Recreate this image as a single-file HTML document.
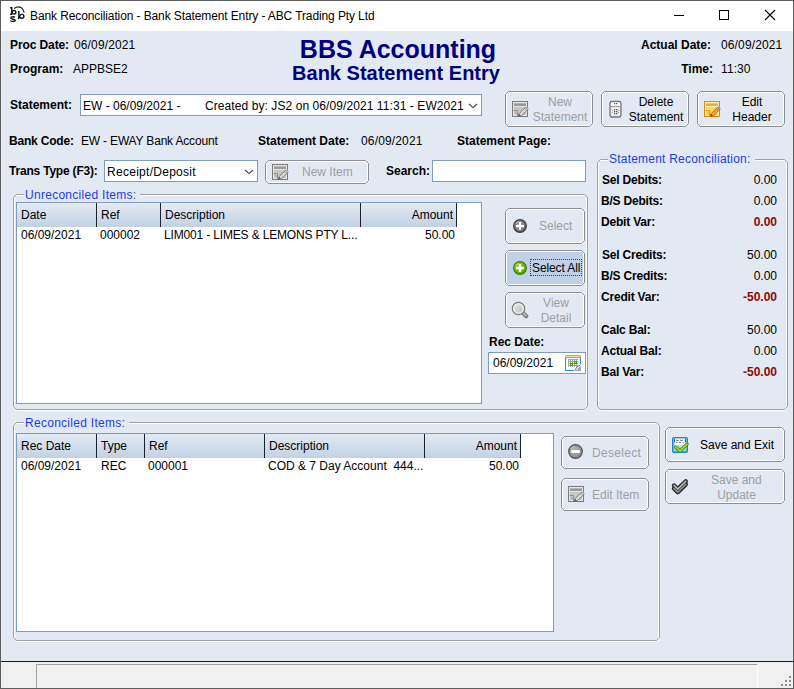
<!DOCTYPE html>
<html><head><meta charset="utf-8">
<style>
*{margin:0;padding:0;box-sizing:border-box}
html,body{width:794px;height:689px;overflow:hidden;background:#E3E9F2}
body{position:relative;font-family:"Liberation Sans",sans-serif;font-size:12px;color:#000}
.a{position:absolute;white-space:pre;line-height:14px}
.b{font-weight:bold}
.r{text-align:right}
.win{position:absolute;left:0;top:0;width:794px;height:689px;border:1px solid #5E5E5E;background:#E3E9F2}
.title{position:absolute;left:1px;top:1px;width:792px;height:30px;background:#fff}
.status{position:absolute;left:1px;top:661px;width:792px;height:27px;background:#F0F0F0;border-top:1px solid #1a1a1a}
.grp{position:absolute;border:1px solid #A0A0A0;border-radius:3px;box-shadow:inset 1px 1px 0 #fff,inset -1px 0 0 #fff,0 1px 0 #fff}
.cap{position:absolute;color:#1840E8;background:#E3E9F2;padding:0 4px 0 1px;letter-spacing:0.28px;line-height:14px;white-space:pre}
.box{position:absolute;background:#fff;border:1px solid #7F9DB9}
.btn{position:absolute;border:1px solid #8E8E8E;border-radius:4px;box-shadow:inset 1px 1px 0 #fff,inset -1px -1px 0 #fff;background:#E3E9F2}
.dis{color:#9E9EA2}
.grid{position:absolute;background:#fff;border:1px solid #7F9DB9}
.hdr{position:absolute;left:0;top:0;height:24px;background:linear-gradient(#E4EAF3,#C2D1E3)}
.sep{position:absolute;top:0;width:1px;height:24px;background:#1A2230}
.red{color:#8B0A0A}
.navy{color:#000080}
</style></head><body>
<div class="win"></div>
<div class="title"></div>
<!-- title icon -->

<div class="a" style="left:30px;top:9px;letter-spacing:-0.11px">Bank Reconciliation - Bank Statement Entry - ABC Trading Pty Ltd</div>
<!-- caption buttons -->
<div style="position:absolute;left:674px;top:15px;width:10px;height:1px;background:#000"></div>
<div style="position:absolute;left:719px;top:10px;width:10px;height:10px;border:1px solid #000"></div>
<svg style="position:absolute;left:764px;top:9px" width="12" height="12" viewBox="0 0 12 12"><path d="M1 1L11 11M11 1L1 11" stroke="#000" stroke-width="1.1"/></svg>

<!-- header -->
<div class="a b" style="left:10px;top:38px;letter-spacing:-0.1px">Proc Date:</div>
<div class="a" style="left:74px;top:38px;letter-spacing:0.13px">06/09/2021</div>
<div class="a b" style="left:10px;top:62px">Program:</div>
<div class="a" style="left:73px;top:62px">APPBSE2</div>
<div class="a b navy" style="left:198px;width:400px;text-align:center;top:35px;font-size:25px;line-height:28px">BBS Accounting</div>
<div class="a b navy" style="left:196px;width:400px;text-align:center;top:62px;font-size:20px;line-height:22px">Bank Statement Entry</div>
<div class="a b r" style="left:611px;width:100px;top:38px">Actual Date:</div>
<div class="a" style="left:721px;top:38px;letter-spacing:0.13px">06/09/2021</div>
<div class="a b r" style="left:613px;width:100px;top:62px">Time:</div>
<div class="a" style="left:721px;top:62px;letter-spacing:0.1px">11:30</div>

<!-- statement row -->
<div class="a b" style="left:10px;top:98px">Statement:</div>
<div class="box" style="left:80px;top:94px;width:402px;height:22px"></div>
<div class="a" style="left:83px;top:99px">EW - 06/09/2021 -</div>
<div class="a" style="left:205px;top:99px;letter-spacing:0.08px">Created by: JS2 on 06/09/2021 11:31 - EW2021</div>

<!-- buttons top -->
<svg style="position:absolute;left:505px;top:91px" width="88" height="36" viewBox="0 0 88 36"><path d="M3.5 0.5H84.5L87.5 3.5V32.5L84.5 35.5H3.5L0.5 32.5V3.5Z" fill="none" stroke="#8E8E8E"/><path d="M3.5 1.5H84.5L86.5 3.5V32.5L84.5 34.5H3.5L1.5 32.5V3.5Z" fill="none" stroke="#fff"/></svg>
<div class="a dis" style="left:530px;width:60px;text-align:center;top:95px">New</div>
<div class="a dis" style="left:530px;width:60px;text-align:center;top:110px">Statement</div>
<svg style="position:absolute;left:601px;top:91px" width="88" height="36" viewBox="0 0 88 36"><path d="M3.5 0.5H84.5L87.5 3.5V32.5L84.5 35.5H3.5L0.5 32.5V3.5Z" fill="none" stroke="#8E8E8E"/><path d="M3.5 1.5H84.5L86.5 3.5V32.5L84.5 34.5H3.5L1.5 32.5V3.5Z" fill="none" stroke="#fff"/></svg>
<div class="a" style="left:626px;width:60px;text-align:center;top:95px">Delete</div>
<div class="a" style="left:626px;width:60px;text-align:center;top:110px">Statement</div>
<svg style="position:absolute;left:697px;top:91px" width="88" height="36" viewBox="0 0 88 36"><path d="M3.5 0.5H84.5L87.5 3.5V32.5L84.5 35.5H3.5L0.5 32.5V3.5Z" fill="none" stroke="#8E8E8E"/><path d="M3.5 1.5H84.5L86.5 3.5V32.5L84.5 34.5H3.5L1.5 32.5V3.5Z" fill="none" stroke="#fff"/></svg>
<div class="a" style="left:722px;width:60px;text-align:center;top:95px">Edit</div>
<div class="a" style="left:722px;width:60px;text-align:center;top:110px">Header</div>

<!-- bank code row -->
<div class="a b" style="left:9px;top:134px;letter-spacing:-0.2px">Bank Code:</div>
<div class="a" style="left:81px;top:134px;letter-spacing:-0.18px">EW - EWAY Bank Account</div>
<div class="a b" style="left:258px;top:134px">Statement Date:</div>
<div class="a" style="left:361px;top:134px;letter-spacing:0.15px">06/09/2021</div>
<div class="a b" style="left:457px;top:134px">Statement Page:</div>

<!-- trans type row -->
<div class="a b" style="left:9px;top:164px;letter-spacing:-0.2px">Trans Type (F3):</div>
<div class="box" style="left:104px;top:160px;width:154px;height:22px"></div>
<div class="a" style="left:107px;top:165px;letter-spacing:0.28px">Receipt/Deposit</div>
<svg style="position:absolute;left:265px;top:160px" width="104" height="24" viewBox="0 0 104 24"><path d="M3.5 0.5H100.5L103.5 3.5V20.5L100.5 23.5H3.5L0.5 20.5V3.5Z" fill="none" stroke="#8E8E8E"/><path d="M3.5 1.5H100.5L102.5 3.5V20.5L100.5 22.5H3.5L1.5 20.5V3.5Z" fill="none" stroke="#fff"/></svg>
<div class="a dis" style="left:302px;top:165px">New Item</div>
<div class="a b" style="left:386px;top:164px">Search:</div>
<div class="box" style="left:432px;top:160px;width:154px;height:22px"></div>

<!-- unreconciled group -->
<svg style="position:absolute;left:13px;top:194px" width="575" height="217" viewBox="0 0 575 217"><path d="M3.5 1.5H571.5M1.5 3.5V212.5M573.5 3.5V212.5M3.5 216.5H571.5L574.5 213.5" fill="none" stroke="#fff"/><path d="M3.5 0.5H571.5L574.5 3.5V212.5L571.5 215.5H3.5L0.5 212.5V3.5Z" fill="none" stroke="#A0A0A0"/></svg>
<div class="cap" style="left:24px;top:188px">Unreconciled Items:</div>
<div class="grid" style="left:16px;top:202px;width:466px;height:202px">
  <div class="hdr" style="width:440px"></div>
  <div class="sep" style="left:79px"></div>
  <div class="sep" style="left:143px"></div>
  <div class="sep" style="left:343px"></div>
  <div class="sep" style="left:439px"></div>
</div>
<div class="a" style="left:21px;top:208px">Date</div>
<div class="a" style="left:101px;top:208px">Ref</div>
<div class="a" style="left:165px;top:208px">Description</div>
<div class="a r" style="left:353px;width:100px;top:208px">Amount</div>
<div class="a" style="left:21px;top:228px">06/09/2021</div>
<div class="a" style="left:100px;top:228px">000002</div>
<div class="a" style="left:164px;top:228px;letter-spacing:-0.16px">LIM001 - LIMES &amp; LEMONS PTY L...</div>
<div class="a r" style="left:355px;width:100px;top:228px">50.00</div>

<svg style="position:absolute;left:505px;top:208px" width="80" height="36" viewBox="0 0 80 36"><path d="M3.5 0.5H76.5L79.5 3.5V32.5L76.5 35.5H3.5L0.5 32.5V3.5Z" fill="none" stroke="#8E8E8E"/><path d="M3.5 1.5H76.5L78.5 3.5V32.5L76.5 34.5H3.5L1.5 32.5V3.5Z" fill="none" stroke="#fff"/></svg>
<div class="a dis" style="left:539px;top:219px">Select</div>
<svg style="position:absolute;left:505px;top:250px" width="80" height="36" viewBox="0 0 80 36"><path d="M3.5 0.5H76.5L79.5 3.5V32.5L76.5 35.5H3.5L0.5 32.5V3.5Z" fill="#BFD0E8" stroke="#8E8E8E"/><path d="M3.5 1.5H76.5L78.5 3.5V32.5L76.5 34.5H3.5L1.5 32.5V3.5Z" fill="none" stroke="#fff"/></svg>
<div class="a" style="left:532px;top:261px;letter-spacing:-0.1px">Select All</div>
<svg style="position:absolute;left:505px;top:292px" width="80" height="36" viewBox="0 0 80 36"><path d="M3.5 0.5H76.5L79.5 3.5V32.5L76.5 35.5H3.5L0.5 32.5V3.5Z" fill="none" stroke="#8E8E8E"/><path d="M3.5 1.5H76.5L78.5 3.5V32.5L76.5 34.5H3.5L1.5 32.5V3.5Z" fill="none" stroke="#fff"/></svg>
<div class="a dis" style="left:526px;width:60px;text-align:center;top:296px">View</div>
<div class="a dis" style="left:526px;width:60px;text-align:center;top:311px">Detail</div>
<div class="a b" style="left:489px;top:335px">Rec Date:</div>
<div class="box" style="left:488px;top:352px;width:98px;height:22px"></div>
<div class="a" style="left:493px;top:356px">06/09/2021</div>

<!-- statement reconciliation group -->
<svg style="position:absolute;left:597px;top:159px" width="191" height="252" viewBox="0 0 191 252"><path d="M3.5 1.5H187.5M1.5 3.5V247.5M189.5 3.5V247.5M3.5 251.5H187.5L190.5 248.5" fill="none" stroke="#fff"/><path d="M3.5 0.5H187.5L190.5 3.5V247.5L187.5 250.5H3.5L0.5 247.5V3.5Z" fill="none" stroke="#A0A0A0"/></svg>
<div class="cap" style="left:608px;top:152px;letter-spacing:0.22px">Statement Reconciliation:</div>
<div class="a b" style="left:602px;top:173px;letter-spacing:-0.2px">Sel Debits:</div>
<div class="a r" style="left:677px;width:100px;top:173px">0.00</div>
<div class="a b" style="left:601px;top:194px;letter-spacing:-0.2px">B/S Debits:</div>
<div class="a r" style="left:677px;width:100px;top:194px">0.00</div>
<div class="a b" style="left:601px;top:215px;letter-spacing:-0.2px">Debit Var:</div>
<div class="a b r red" style="left:677px;width:100px;top:215px">0.00</div>
<div class="a b" style="left:602px;top:248px;letter-spacing:-0.2px">Sel Credits:</div>
<div class="a r" style="left:677px;width:100px;top:248px">50.00</div>
<div class="a b" style="left:601px;top:269px;letter-spacing:-0.2px">B/S Credits:</div>
<div class="a r" style="left:677px;width:100px;top:269px">0.00</div>
<div class="a b" style="left:601px;top:290px;letter-spacing:-0.2px">Credit Var:</div>
<div class="a b r red" style="left:677px;width:100px;top:290px">-50.00</div>
<div class="a b" style="left:601px;top:323px;letter-spacing:-0.2px">Calc Bal:</div>
<div class="a r" style="left:677px;width:100px;top:323px">50.00</div>
<div class="a b" style="left:601px;top:344px;letter-spacing:-0.2px">Actual Bal:</div>
<div class="a r" style="left:677px;width:100px;top:344px">0.00</div>
<div class="a b" style="left:601px;top:365px;letter-spacing:-0.2px">Bal Var:</div>
<div class="a b r red" style="left:677px;width:100px;top:365px">-50.00</div>

<!-- reconciled group -->
<svg style="position:absolute;left:13px;top:422px" width="647" height="220" viewBox="0 0 647 220"><path d="M3.5 1.5H643.5M1.5 3.5V215.5M645.5 3.5V215.5M3.5 219.5H643.5L646.5 216.5" fill="none" stroke="#fff"/><path d="M3.5 0.5H643.5L646.5 3.5V215.5L643.5 218.5H3.5L0.5 215.5V3.5Z" fill="none" stroke="#A0A0A0"/></svg>
<div class="cap" style="left:24px;top:416px">Reconciled Items:</div>
<div class="grid" style="left:16px;top:433px;width:538px;height:199px">
  <div class="hdr" style="width:504px"></div>
  <div class="sep" style="left:79px"></div>
  <div class="sep" style="left:127px"></div>
  <div class="sep" style="left:247px"></div>
  <div class="sep" style="left:407px"></div>
  <div class="sep" style="left:503px"></div>
</div>
<div class="a" style="left:21px;top:439px">Rec Date</div>
<div class="a" style="left:101px;top:439px">Type</div>
<div class="a" style="left:149px;top:439px">Ref</div>
<div class="a" style="left:269px;top:439px">Description</div>
<div class="a r" style="left:417px;width:100px;top:439px">Amount</div>
<div class="a" style="left:21px;top:459px">06/09/2021</div>
<div class="a" style="left:101px;top:459px">REC</div>
<div class="a" style="left:148px;top:459px">000001</div>
<div class="a" style="left:268px;top:459px">COD &amp; 7 Day Account  444...</div>
<div class="a r" style="left:419px;width:100px;top:459px">50.00</div>

<svg style="position:absolute;left:561px;top:436px" width="88" height="33" viewBox="0 0 88 33"><path d="M3.5 0.5H84.5L87.5 3.5V29.5L84.5 32.5H3.5L0.5 29.5V3.5Z" fill="none" stroke="#8E8E8E"/><path d="M3.5 1.5H84.5L86.5 3.5V29.5L84.5 31.5H3.5L1.5 29.5V3.5Z" fill="none" stroke="#fff"/></svg>
<div class="a dis" style="left:592px;top:446px;letter-spacing:0.3px">Deselect</div>
<svg style="position:absolute;left:561px;top:478px" width="88" height="33" viewBox="0 0 88 33"><path d="M3.5 0.5H84.5L87.5 3.5V29.5L84.5 32.5H3.5L0.5 29.5V3.5Z" fill="none" stroke="#8E8E8E"/><path d="M3.5 1.5H84.5L86.5 3.5V29.5L84.5 31.5H3.5L1.5 29.5V3.5Z" fill="none" stroke="#fff"/></svg>
<div class="a dis" style="left:592px;top:488px">Edit Item</div>
<svg style="position:absolute;left:665px;top:427px" width="120" height="35" viewBox="0 0 120 35"><path d="M3.5 0.5H116.5L119.5 3.5V31.5L116.5 34.5H3.5L0.5 31.5V3.5Z" fill="none" stroke="#8E8E8E"/><path d="M3.5 1.5H116.5L118.5 3.5V31.5L116.5 33.5H3.5L1.5 31.5V3.5Z" fill="none" stroke="#fff"/></svg>
<div class="a" style="left:700px;top:438px">Save and Exit</div>
<svg style="position:absolute;left:665px;top:469px" width="120" height="35" viewBox="0 0 120 35"><path d="M3.5 0.5H116.5L119.5 3.5V31.5L116.5 34.5H3.5L0.5 31.5V3.5Z" fill="none" stroke="#8E8E8E"/><path d="M3.5 1.5H116.5L118.5 3.5V31.5L116.5 33.5H3.5L1.5 31.5V3.5Z" fill="none" stroke="#fff"/></svg>
<div class="a dis" style="left:711px;top:473px">Save and</div>
<div class="a dis" style="left:711px;width:51px;text-align:center;top:488px">Update</div>

<!-- status bar -->
<div class="status"></div>
<div style="position:absolute;left:36px;top:664px;width:722px;height:24px;border-top:1px solid #A0A0A0;border-left:1px solid #A0A0A0;border-right:1px solid #fff"></div>
<!-- icons -->
<svg style="position:absolute;left:468px;top:103px" width="10" height="6" viewBox="0 0 10 6"><path d="M1 1L5 4.6L9 1" fill="none" stroke="#404040" stroke-width="1.1"/></svg>
<svg style="position:absolute;left:244px;top:169px" width="10" height="6" viewBox="0 0 10 6"><path d="M1 1L5 4.6L9 1" fill="none" stroke="#404040" stroke-width="1.1"/></svg>
<div style="position:absolute;left:530px;top:259px;width:52px;height:17px;border:1px dotted #4a3a2a"></div>

<svg style="position:absolute;left:512px;top:101px" width="18" height="17" viewBox="0 0 18 17">
<rect x="0.5" y="0.5" width="15" height="15" fill="#c6c6c6" stroke="#7c7c7c"/>
<rect x="1.5" y="1.5" width="13" height="13" fill="none" stroke="#e4e4e4"/>
<rect x="2" y="2.6" width="12" height="2.4" fill="#9a9a9a"/>
<rect x="2" y="5" width="12" height="1" fill="#e4e4e4"/>
<path d="M1.5 9.5H5.5V15" fill="none" stroke="#7c7c7c" opacity="0.75"/>
<path d="M2.5 10.5L5 13" stroke="#7c7c7c" opacity="0.35"/>
<path d="M6.3 15.2L7.2 12.6L13.6 6.2L15.8 8.4L9.4 14.8Z" fill="#dadada" stroke="#5c5c5c" stroke-width="0.75"/>
<path d="M13.6 6.2L15.8 8.4L16.8 7.4L14.6 5.2Z" fill="#b8b8b8"/>
<path d="M12.6 7.2L14.8 9.4" stroke="#9a9a9a" stroke-width="0.9"/>
<path d="M6.3 15.2L7.1 13L8.6 14.5Z" fill="#505050"/>
</svg>
<svg style="position:absolute;left:704px;top:101px" width="18" height="17" viewBox="0 0 18 17">
<rect x="0.5" y="0.5" width="15" height="15" fill="#FFD65A" stroke="#D08A1E"/>
<rect x="1.5" y="1.5" width="13" height="13" fill="none" stroke="#FFF2B8"/>
<rect x="2" y="2.6" width="12" height="2.4" fill="#F2AE2A"/>
<rect x="2" y="5" width="12" height="1" fill="#FFF2B8"/>
<path d="M1.5 9.5H5.5V15" fill="none" stroke="#D08A1E" opacity="0.75"/>
<path d="M2.5 10.5L5 13" stroke="#D08A1E" opacity="0.35"/>
<path d="M6.3 15.2L7.2 12.6L13.6 6.2L15.8 8.4L9.4 14.8Z" fill="#FFA21C" stroke="#A85400" stroke-width="0.75"/>
<path d="M13.6 6.2L15.8 8.4L16.8 7.4L14.6 5.2Z" fill="#E070E0"/>
<path d="M12.6 7.2L14.8 9.4" stroke="#5a8ad0" stroke-width="0.9"/>
<path d="M6.3 15.2L7.1 13L8.6 14.5Z" fill="#404040"/>
</svg>
<svg style="position:absolute;left:272px;top:164px" width="18" height="17" viewBox="0 0 18 17">
<rect x="0.5" y="0.5" width="15" height="15" fill="#c6c6c6" stroke="#7c7c7c"/>
<rect x="1.5" y="1.5" width="13" height="13" fill="none" stroke="#e4e4e4"/>
<rect x="2" y="2.6" width="12" height="2.4" fill="#9a9a9a"/>
<rect x="2" y="5" width="12" height="1" fill="#e4e4e4"/>
<path d="M1.5 9.5H5.5V15" fill="none" stroke="#7c7c7c" opacity="0.75"/>
<path d="M2.5 10.5L5 13" stroke="#7c7c7c" opacity="0.35"/>
<path d="M6.3 15.2L7.2 12.6L13.6 6.2L15.8 8.4L9.4 14.8Z" fill="#dadada" stroke="#5c5c5c" stroke-width="0.75"/>
<path d="M13.6 6.2L15.8 8.4L16.8 7.4L14.6 5.2Z" fill="#b8b8b8"/>
<path d="M12.6 7.2L14.8 9.4" stroke="#9a9a9a" stroke-width="0.9"/>
<path d="M6.3 15.2L7.1 13L8.6 14.5Z" fill="#505050"/>
</svg>
<svg style="position:absolute;left:568px;top:486px" width="18" height="17" viewBox="0 0 18 17">
<rect x="0.5" y="0.5" width="15" height="15" fill="#c6c6c6" stroke="#7c7c7c"/>
<rect x="1.5" y="1.5" width="13" height="13" fill="none" stroke="#e4e4e4"/>
<rect x="2" y="2.6" width="12" height="2.4" fill="#9a9a9a"/>
<rect x="2" y="5" width="12" height="1" fill="#e4e4e4"/>
<path d="M1.5 9.5H5.5V15" fill="none" stroke="#7c7c7c" opacity="0.75"/>
<path d="M2.5 10.5L5 13" stroke="#7c7c7c" opacity="0.35"/>
<path d="M6.3 15.2L7.2 12.6L13.6 6.2L15.8 8.4L9.4 14.8Z" fill="#dadada" stroke="#5c5c5c" stroke-width="0.75"/>
<path d="M13.6 6.2L15.8 8.4L16.8 7.4L14.6 5.2Z" fill="#b8b8b8"/>
<path d="M12.6 7.2L14.8 9.4" stroke="#9a9a9a" stroke-width="0.9"/>
<path d="M6.3 15.2L7.1 13L8.6 14.5Z" fill="#505050"/>
</svg>
<svg style="position:absolute;left:609px;top:100px" width="13" height="18" viewBox="0 0 13 18">
<path d="M2 1.5H11L12 3V15.5L11 17H2L1 15.5V3Z" fill="#dcdcdc" stroke="#7a7a7a" stroke-width="1.3"/>
<path d="M2.2 2.5H10.8Q11.5 4.5 10.8 6.2Q6.5 5.2 2.2 6.2Q1.5 4.5 2.2 2.5Z" fill="#fcfcfc"/>
<path d="M2 6.8Q6.5 5.6 11 6.8" fill="none" stroke="#9a9a9a" stroke-width="1"/>
<rect x="2.2" y="7.5" width="8.6" height="8" fill="#f2f2f2"/>
<g fill="#555"><rect x="5" y="3" width="1.2" height="1.2"/><rect x="7" y="3" width="1.2" height="1.2"/>
<rect x="5" y="9" width="1.3" height="1.3"/><rect x="7" y="9" width="1.3" height="1.3"/>
<rect x="5" y="11" width="1.3" height="1.3"/><rect x="7" y="11" width="1.3" height="1.3"/>
<rect x="5" y="13" width="1.3" height="1.3"/><rect x="7" y="13" width="1.3" height="1.3"/></g>
<g fill="#8a8a8a"><rect x="3" y="10" width="1" height="1"/><rect x="9" y="10" width="1" height="1"/><rect x="3" y="12" width="1" height="1"/><rect x="9" y="12" width="1" height="1"/></g>
</svg>
<svg style="position:absolute;left:513px;top:219px" width="14" height="14" viewBox="0 0 15 15">
<defs><radialGradient id="g513219" cx="0.4" cy="0.35" r="0.7"><stop offset="0" stop-color="#9a9a9a"/><stop offset="1" stop-color="#5e5e5e"/></radialGradient></defs>
<circle cx="7.5" cy="7.5" r="6.8" fill="url(#g513219)" stroke="#3c3c3c" stroke-width="1.2"/>
<path d="M3 5Q4 3 6 2.4" fill="none" stroke="#fff" stroke-opacity="0.6" stroke-width="0.8"/>
<rect x="3.2" y="6.3" width="8.6" height="2.6" fill="#fff"/><rect x="6.2" y="3.2" width="2.6" height="8.6" fill="#fff"/></svg>
<svg style="position:absolute;left:513px;top:261px" width="14" height="14" viewBox="0 0 15 15">
<defs><radialGradient id="g513261" cx="0.4" cy="0.35" r="0.7"><stop offset="0" stop-color="#a6d820"/><stop offset="1" stop-color="#4f9a00"/></radialGradient></defs>
<circle cx="7.5" cy="7.5" r="6.8" fill="url(#g513261)" stroke="#3a8200" stroke-width="1.2"/>
<path d="M3 5Q4 3 6 2.4" fill="none" stroke="#fff" stroke-opacity="0.6" stroke-width="0.8"/>
<rect x="3.2" y="6.3" width="8.6" height="2.6" fill="#fff"/><rect x="6.2" y="3.2" width="2.6" height="8.6" fill="#fff"/></svg>
<svg style="position:absolute;left:568px;top:444px" width="15" height="15" viewBox="0 0 15 15">
<defs><radialGradient id="g568444" cx="0.4" cy="0.35" r="0.7"><stop offset="0" stop-color="#b4b4b4"/><stop offset="1" stop-color="#868686"/></radialGradient></defs>
<circle cx="7.5" cy="7.5" r="6.8" fill="url(#g568444)" stroke="#505050" stroke-width="1.2"/>
<path d="M3 5Q4 3 6 2.4" fill="none" stroke="#fff" stroke-opacity="0.6" stroke-width="0.8"/>
<rect x="3.2" y="6.1" width="8.6" height="2.8" fill="#fff"/></svg>
<svg style="position:absolute;left:511px;top:301px" width="18" height="18" viewBox="0 0 18 18">
<defs><linearGradient id="mg" x1="0" y1="0" x2="1" y2="1"><stop offset="0" stop-color="#ececec"/><stop offset="1" stop-color="#b8b8b8"/></linearGradient></defs>
<path d="M11.8 11.6L15.2 15.2" stroke="#7e7e7e" stroke-width="4.2" stroke-linecap="round"/>
<path d="M12.3 11.9L14.8 14.6" stroke="#bcbcbc" stroke-width="1.6" stroke-linecap="round"/>
<circle cx="7.5" cy="7.5" r="6.1" fill="url(#mg)" stroke="#7c7c7c" stroke-width="1.4"/>
<circle cx="7.5" cy="7.5" r="4.8" fill="none" stroke="#fafafa" stroke-width="1.1"/>
</svg>
<svg style="position:absolute;left:565px;top:355px" width="16" height="16" viewBox="0 0 16 16" shape-rendering="crispEdges">
<rect x="0" y="0" width="16" height="16" fill="#2A8AD0"/>
<rect x="1" y="3" width="14" height="12" fill="#fff"/>
<rect x="1" y="3" width="14" height="2" fill="#DDF6FF"/>
<rect x="0" y="0" width="16" height="3" fill="#F7941D"/>
<rect x="1" y="1" width="14" height="1" fill="#FFD9A8"/>
<rect x="0" y="0" width="1" height="1" fill="#E3E9F2"/><rect x="15" y="0" width="1" height="1" fill="#E3E9F2"/>
<rect x="3" y="4" width="10" height="8" fill="#A9A9A9"/>
<g fill="#F4F4FF"><rect x="4" y="5" width="1" height="1"/><rect x="4" y="7" width="1" height="1"/><rect x="4" y="9" width="1" height="1"/><rect x="4" y="11" width="1" height="1"/><rect x="6" y="5" width="1" height="1"/><rect x="6" y="7" width="1" height="1"/><rect x="6" y="9" width="1" height="1"/><rect x="6" y="11" width="1" height="1"/><rect x="8" y="5" width="1" height="1"/><rect x="8" y="7" width="1" height="1"/><rect x="8" y="9" width="1" height="1"/><rect x="8" y="11" width="1" height="1"/><rect x="10" y="5" width="1" height="1"/><rect x="10" y="7" width="1" height="1"/><rect x="10" y="9" width="1" height="1"/><rect x="10" y="11" width="1" height="1"/><rect x="12" y="5" width="1" height="1"/><rect x="12" y="7" width="1" height="1"/><rect x="12" y="9" width="1" height="1"/><rect x="12" y="11" width="1" height="1"/></g>
<rect x="5" y="8" width="3" height="3" fill="#4FA300"/><rect x="6" y="9" width="1" height="1" fill="#C8F040"/>
<rect x="9" y="6" width="3" height="3" fill="#4FA300"/><rect x="10" y="7" width="1" height="1" fill="#C8F040"/>
<path d="M10 16L16 10V16Z" fill="#A8A8A8" shape-rendering="auto"/>
<path d="M9.5 16L16 9.5" fill="none" stroke="#fff" stroke-width="1.2" shape-rendering="auto"/>
<path d="M10 15.5Q11 11.2 15.5 10" fill="none" stroke="#2A8AD0" stroke-width="1" shape-rendering="auto"/>
</svg>
<svg style="position:absolute;left:672px;top:437px" width="17" height="17" viewBox="0 0 17 17">
<defs><linearGradient id="sg" x1="0" y1="0" x2="0" y2="1"><stop offset="0" stop-color="#c4e8ff"/><stop offset="1" stop-color="#8ccdf5"/></linearGradient></defs>
<rect x="0.7" y="0.7" width="14.6" height="14.6" rx="1.3" fill="url(#sg)" stroke="#1a84cc" stroke-width="1.4"/>
<rect x="3" y="1.6" width="10" height="6.6" fill="#fafcff"/>
<path d="M2.6 2v3.2M13.4 2v3.2" stroke="#0e3f7a" stroke-width="0.9"/>
<g fill="#555" opacity="0.75"><rect x="4" y="2.8" width="3" height="1"/><rect x="8" y="2.8" width="3" height="1"/><rect x="4" y="5" width="1.5" height="1"/><rect x="7" y="5" width="2" height="1"/><rect x="10.5" y="5" width="1" height="1"/></g>
<path d="M3.8 10.2L8 14.2L15 7.2" fill="none" stroke="#3d8c00" stroke-width="3.3" stroke-linejoin="round" stroke-linecap="round"/>
<path d="M3.8 10.2L8 14.2L15 7.2" fill="none" stroke="#a4dc1c" stroke-width="1.7" stroke-linejoin="round" stroke-linecap="round"/>
</svg>
<svg style="position:absolute;left:666px;top:474px" width="26" height="26" viewBox="0 0 26 26">
<g fill="none" stroke-linejoin="round" stroke-linecap="round">
<path d="M8 11.5L11.8 15.2L19.8 7.4M8 14.5L11.8 18.2L19.8 10.4" stroke="#262626" stroke-width="4.4"/>
<path d="M8 14.5L11.8 18.2L19.8 10.4" stroke="#8c8c8c" stroke-width="1.8"/>
<path d="M8 11.3L11.8 15L19.8 7.2" stroke="#c4c4c4" stroke-width="1.6"/>
</g></svg>
<svg style="position:absolute;left:6px;top:4px" width="24" height="22" viewBox="0 0 24 22">
<g fill="none" stroke="#111" stroke-width="1.4">
<path d="M4.1 3.8H6.4M5.7 3.8V10.5M4.1 10.2H6.2"/>
<ellipse cx="8" cy="8.3" rx="1.9" ry="1.8"/>
<path d="M12 7.8H13.5M12.9 7.8V14.6M12 14.3H13.3"/>
<ellipse cx="15.8" cy="12.3" rx="2.1" ry="1.9"/>
<path d="M9 13.4Q8 12.6 6.8 12.7Q4.8 12.8 4.9 14.2Q5 15 7 15.3Q9.2 15.7 9.2 16.5Q9.2 17.4 6.8 17.4Q5 17.4 4.3 16.6"/>
<path d="M8.1 4.5Q11.5 2 15 3.4Q17.3 4.6 18.2 8.6" stroke-width="1.1"/>
</g></svg>
<div style="position:absolute;left:789px;top:676px;width:2px;height:2px;background:#8c8c8c"></div><div style="position:absolute;left:785px;top:680px;width:2px;height:2px;background:#8c8c8c"></div><div style="position:absolute;left:789px;top:680px;width:2px;height:2px;background:#8c8c8c"></div><div style="position:absolute;left:781px;top:684px;width:2px;height:2px;background:#8c8c8c"></div><div style="position:absolute;left:785px;top:684px;width:2px;height:2px;background:#8c8c8c"></div><div style="position:absolute;left:789px;top:684px;width:2px;height:2px;background:#8c8c8c"></div>
</body></html>
